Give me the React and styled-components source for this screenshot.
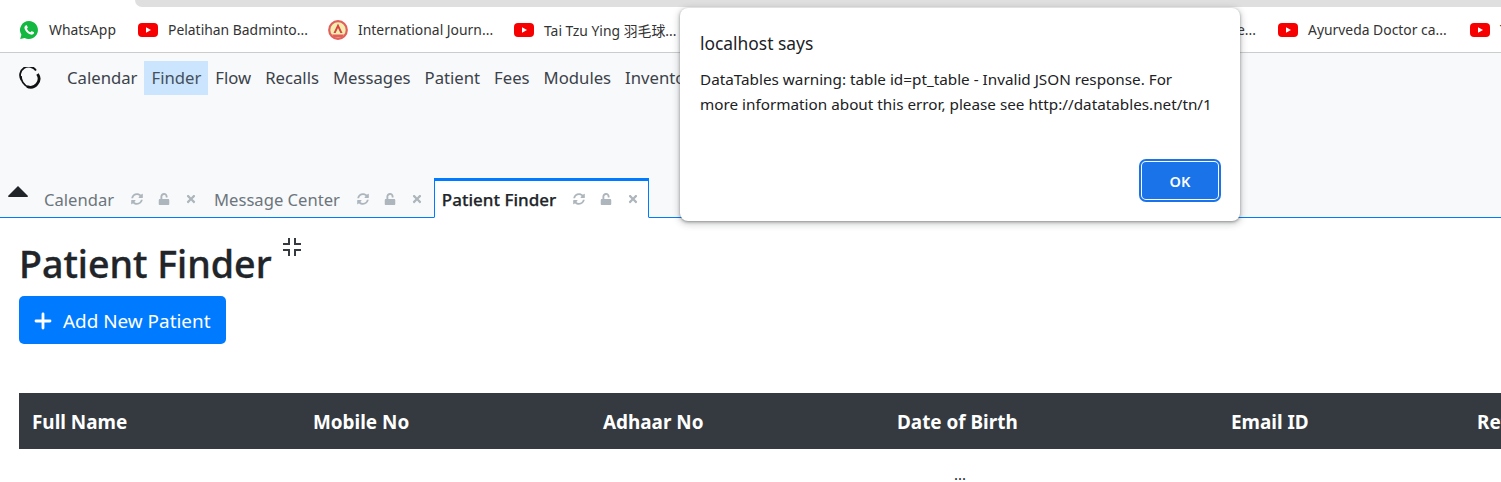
import React from "react";
import styled, { createGlobalStyle } from "styled-components";
import { FaSyncAlt, FaUnlock, FaTimes } from "react-icons/fa";

const GlobalStyle = createGlobalStyle`
html, body {
  margin: 0;
  padding: 0;
  width: 1501px;
  height: 482px;
  overflow: hidden;
  background: #fff;
  font-family: "Noto Sans", "Open Sans", sans-serif;
  color: #212529;
}
`

const Page = styled.div`
position: relative;
width: 1501px;
height: 482px;
overflow: hidden;
`

const ChromeStrip = styled.div`
height: 7px;
margin-left: 135px;
background-color: #dfdfdf;
border-bottom-left-radius: 8px;
`

const BookmarkBar = styled.div`
height: 46px;
box-sizing: border-box;
padding-left: 19px;
display: flex;
align-items: center;
gap: 10px;
border-bottom: 1px solid #ccc;
white-space: nowrap;
overflow: hidden;
`

const BookmarkIcon = styled.svg`
width: 20px;
height: 20px;
flex: none;
`

const BookmarkLabel = styled.span`
flex: none;
width: ${({ $w }) => $w}px;
margin-right: 11px;
font-size: 13.9px;
color: #333;
font-family: "Noto Sans", "Noto Sans CJK SC", sans-serif;
`

const BookmarkSpacer = styled.div`
flex: none;
width: ${({ $w }) => $w}px;
`

const NavPanel = styled.div`
background-color: #f8f9fa;
height: 165px;
box-sizing: border-box;
border-bottom: 1px solid #007bff;
padding-top: 8px;
display: flex;
flex-direction: column;
justify-content: space-between;
`

const Menu = styled.div`
display: flex;
align-items: center;
padding-left: 19px;
`

const Logo = styled.svg`
width: 22px;
height: 22px;
margin-right: 19px;
flex: none;
`

const MenuItem = styled.div`
padding: 0 7px;
height: 34px;
line-height: 34px;
font-size: 16.7px;
color: ${({ $active }) => ($active ? "#45505a" : "#3b424a")};
background-color: ${({ $active }) => ($active ? "#cce5ff" : "transparent")};
white-space: nowrap;
`

const TabRow = styled.div`
display: flex;
align-items: flex-end;
height: 40px;
margin-bottom: -1px;
`

const Collapse = styled.svg`
width: 20px;
height: 11px;
margin: 0 8px 21px 8px;
flex: none;
`

const Tab = styled.div`
display: flex;
align-items: center;
height: ${({ $active }) => ($active ? "40px" : "38px")};
box-sizing: border-box;
margin-left: ${({ $active }) => ($active ? "2px" : "0")};
padding: ${({ $active }) => ($active ? "0 9px 0 7px" : "0 9px 0 8px")};
font-size: ${({ $active }) => ($active ? "17px" : "16.6px")};
font-weight: ${({ $active }) => ($active ? "500" : "400")};
-webkit-text-stroke: ${({ $active }) => ($active ? "0.25px" : "0")};
white-space: nowrap;
color: ${({ $active }) => ($active ? "#212529" : "#6c757d")};
background-color: ${({ $active }) => ($active ? "#fff" : "transparent")};
border: ${({ $active }) => ($active ? "1px solid #007bff" : "none")};
border-top-width: ${({ $active }) => ($active ? "3px" : "0")};
border-bottom: ${({ $active }) => ($active ? "1px solid #fff" : "none")};
`

const TabIcons = styled.div`
display: flex;
align-items: center;
gap: 15px;
margin-left: 17px;
color: #adb5bd;
`

const Content = styled.div`
padding: 0 0 0 19px;
`

const TitleRow = styled.div`
display: flex;
align-items: flex-start;
height: 78px;
`

const Title = styled.h1`
margin: 17px 0 0;
font-size: 37.6px;
line-height: 58px;
font-weight: 500;
-webkit-text-stroke: 0.4px #212529;
white-space: nowrap;
`

const ShrinkIcon = styled.svg`
width: 18px;
height: 18px;
margin: 20px 0 0 11px;
flex: none;
`

const AddButton = styled.button`
display: flex;
align-items: center;
gap: 11px;
height: 48px;
box-sizing: border-box;
padding: 1px 16px 0 15px;
border: none;
border-radius: 5px;
background-color: #007bff;
color: #fff;
font-family: inherit;
font-size: 18.9px;
white-space: nowrap;
`

const PlusIcon = styled.svg`
width: 18px;
height: 18px;
`

const Table = styled.div`
width: 1882px;
margin-top: 49px;
`

const TableHead = styled.div`
display: grid;
grid-template-columns: 281px 290px 294px 334px 246px 437px;
height: 56px;
background-color: #343a40;
color: #fff;
`

const HeadCell = styled.div`
padding-left: 13px;
line-height: 58px;
font-size: 18.9px;
font-weight: 700;
white-space: nowrap;
`

const BodyRow = styled.div`
text-align: center;
margin-top: 15px;
font-size: 15px;
line-height: 20px;
`

const Dialog = styled.div`
position: absolute;
top: 8px;
left: 680px;
width: 560px;
height: 213px;
box-sizing: border-box;
padding: 23px 20px 20px;
background-color: #fff;
border-radius: 8px;
box-shadow: 0 1px 3px rgba(60, 64, 67, 0.5), 0 2px 6px 2px rgba(60, 64, 67, 0.2);
display: flex;
flex-direction: column;
`

const DialogTitle = styled.div`
font-size: 17.4px;
line-height: 24px;
color: #202124;
`

const DialogText = styled.div`
margin-top: 12px;
font-size: 15.27px;
line-height: 25px;
color: #202124;
white-space: nowrap;
`

const DialogFooter = styled.div`
margin-top: auto;
display: flex;
justify-content: flex-end;
`

const OkButton = styled.button`
width: 76px;
height: 37px;
margin: 2px;
border: none;
border-radius: 4px;
background-color: #1a73e8;
color: #fff;
font-family: inherit;
font-size: 14.5px;
font-weight: 600;
outline: 2px solid #1a73e8;
outline-offset: 1px;
`

const tabs = ["Calendar", "Message Center", "Patient Finder"];
const menu = ["Calendar", "Finder", "Flow", "Recalls", "Messages", "Patient", "Fees", "Modules", "Inventory"];
const columns = ["Full Name", "Mobile No", "Adhaar No", "Date of Birth", "Email ID", "Referred By"];

const WhatsApp = () => (
    <BookmarkIcon viewBox="0 0 20 20">
        <path d="M10 1 A9 9 0 1 1 5.6 17.9 L1.2 19 L2.4 14.8 A9 9 0 0 1 10 1 Z" fill="#12b83f" />
        <path d="M7 5.2 C6 5.6 5.2 6.8 5.5 8.3 C6 11 9 14 12 14.6 C13.4 14.8 14.6 14 15 12.9 C15.1 12.5 15 12.3 14.7 12.1 L12.9 11.2 C12.6 11.1 12.4 11.1 12.2 11.4 L11.5 12.2 C10 11.7 8.4 10.2 7.9 8.7 L8.6 7.9 C8.8 7.7 8.8 7.5 8.7 7.2 L7.9 5.5 C7.7 5.2 7.4 5.1 7 5.2 Z" fill="#fff" />
    </BookmarkIcon>
);

const YouTube = () => (
    <BookmarkIcon viewBox="0 0 20 20">
        <rect x="0" y="3" width="20" height="14" rx="4" fill="#f60002" />
        <path d="M8 7.2 L13 10 L8 12.8 Z" fill="#fff" />
    </BookmarkIcon>
);

const Journal = () => (
    <BookmarkIcon viewBox="0 0 20 20">
        <circle cx="10" cy="10" r="8.8" fill="#f3eeb0" stroke="#e2605c" strokeWidth="2.2" />
        <path d="M10 3.5 L14.5 13 H12.4 L10 8 L7.6 13 H5.5 Z" fill="#d8423f" />
        <path d="M4 14.5 H16 L14 17.5 H6 Z" fill="#e2605c" />
    </BookmarkIcon>
);

const App = () => {
    return (
        <Page>
            <GlobalStyle />
            <ChromeStrip />
            <BookmarkBar>
                <WhatsApp />
                <BookmarkLabel $w={68}>WhatsApp</BookmarkLabel>
                <YouTube />
                <BookmarkLabel $w={139}>Pelatihan Badminto...</BookmarkLabel>
                <Journal />
                <BookmarkLabel $w={135}>International Journ...</BookmarkLabel>
                <YouTube />
                <BookmarkLabel $w={136}>Tai Tzu Ying 羽毛球...</BookmarkLabel>
                <BookmarkSpacer $w={526} />
                <BookmarkLabel $w={20}>e...</BookmarkLabel>
                <YouTube />
                <BookmarkLabel $w={141}>Ayurveda Doctor ca...</BookmarkLabel>
                <YouTube />
                <BookmarkLabel $w={20}>T</BookmarkLabel>
            </BookmarkBar>
            <NavPanel>
                <Menu>
                    <Logo viewBox="0 0 22 22">
                        <path d="M2.5 13 A8.5 8.5 0 0 1 17 3.5" fill="none" stroke="#111" strokeWidth="1.8" />
                        <path d="M18.5 7 A8.5 8.5 0 0 1 8 19.5" fill="none" stroke="#111" strokeWidth="2.8" />
                        <path d="M2 9 Q2 17 10 20.5" fill="none" stroke="#111" strokeWidth="1.6" />
                    </Logo>
                    {menu.map(el => <MenuItem key={el} $active={el === "Finder"}>{el}</MenuItem>)}
                </Menu>
                <TabRow>
                    <Collapse viewBox="0 0 20 11">
                        <path d="M10 0 L20 10 Q20 11 19 11 H1 Q0 11 0 10 Z" fill="#212529" />
                    </Collapse>
                    {tabs.map(el => (
                        <Tab key={el} $active={el === "Patient Finder"}>
                            {el}
                            <TabIcons>
                                <FaSyncAlt size={12} />
                                <FaUnlock size={12} />
                                <FaTimes size={12} />
                            </TabIcons>
                        </Tab>
                    ))}
                </TabRow>
            </NavPanel>
            <Content>
                <TitleRow>
                    <Title>Patient Finder</Title>
                    <ShrinkIcon viewBox="0 0 18 18">
                        <path d="M6 0 V6 H0 M12 0 V6 H18 M6 18 V12 H0 M12 18 V12 H18" fill="none" stroke="#343a40" strokeWidth="2" />
                    </ShrinkIcon>
                </TitleRow>
                <AddButton>
                    <PlusIcon viewBox="0 0 18 18">
                        <path d="M9 2 V16 M2 9 H16" stroke="#fff" strokeWidth="2.8" strokeLinecap="round" />
                    </PlusIcon>
                    Add New Patient
                </AddButton>
                <Table>
                    <TableHead>
                        {columns.map(el => <HeadCell key={el}>{el}</HeadCell>)}
                    </TableHead>
                    <BodyRow>...</BodyRow>
                </Table>
            </Content>
            <Dialog>
                <DialogTitle>localhost says</DialogTitle>
                <DialogText>
                    DataTables warning: table id=pt_table - Invalid JSON response. For<br />
                    more information about this error, please see http://datatables.net/tn/1
                </DialogText>
                <DialogFooter>
                    <OkButton>OK</OkButton>
                </DialogFooter>
            </Dialog>
        </Page>
    )
};

export default App;
